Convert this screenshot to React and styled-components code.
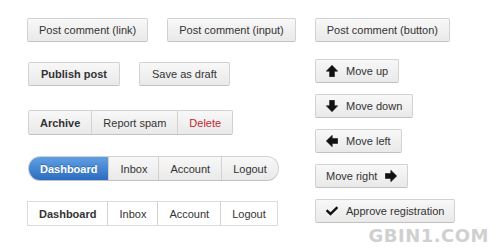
import React from "react";
import styled, { createGlobalStyle, css } from "styled-components";
import { FaCheck } from "react-icons/fa";

const Global = createGlobalStyle`
  html, body { margin: 0; padding: 0; background: #fff; }
  body { font-family: "Liberation Sans", Arial, sans-serif; }
`;

const Page = styled.div`
  position: relative;
  width: 500px;
  height: 250px;
  box-sizing: border-box;
  padding: 18px 0 0 27px;
  overflow: hidden;
`;

const TopRow = styled.div`
  display: flex;
  gap: 19px;
`;

const Columns = styled.div`
  display: flex;
  margin-top: 17px;
`;

const LeftCol = styled.div`
  width: 288px;
  display: flex;
  flex-direction: column;
  align-items: flex-start;
  padding-top: 3px;
`;

const RightCol = styled.div`
  display: flex;
  flex-direction: column;
  align-items: flex-start;
  gap: 11px;
`;

const Row = styled.div`
  display: flex;
  gap: ${(p) => p.$gap || 0}px;
  margin-top: ${(p) => p.$mt || 0}px;
  margin-left: ${(p) => p.$ml || 0}px;
`;

const baseBtn = css`
  box-sizing: border-box;
  height: 24px;
  display: inline-flex;
  align-items: center;
  font-family: "Liberation Sans", Arial, sans-serif;
  font-size: 11px;
  color: #333;
  white-space: nowrap;
`;

const Button = styled.span`
  ${baseBtn};
  padding: 0 ${(p) => (p.$icon ? 10 : p.$wide ? 12 : 11)}px;
  gap: 8px;
  border: 1px solid #d2d2d2;
  border-bottom-color: #c2c2c2;
  border-radius: 2px;
  background: linear-gradient(#f8f8f8, #e9e9e9);
  font-weight: ${(p) => (p.$bold ? 700 : 400)};
`;

const Group = styled.div`
  display: inline-flex;
  border: 1px solid #d2d2d2;
  border-bottom-color: #c2c2c2;
  border-radius: ${(p) => (p.$pill ? "12px" : p.$flat ? "0" : "2px")};
  background: ${(p) => (p.$flat ? "#fff" : "linear-gradient(#f8f8f8, #e9e9e9)")};
  overflow: hidden;
  ${(p) => p.$flat && css`border-color: #dcdcdc;`}
`;

const Segment = styled.span`
  ${baseBtn};
  height: 23px;
  padding: 0 11px;
  border-left: 1px solid #d2d2d2;
  &:first-child { border-left: none; }
  font-weight: ${(p) => (p.$bold ? 700 : 400)};
  color: ${(p) => (p.$danger ? "#c1272d" : "#333")};
  ${(p) =>
    p.$active &&
    css`
      color: #fff;
      background: linear-gradient(#5fa0e4, #2c6cc0);
      text-shadow: 0 -1px 0 rgba(0, 0, 0, 0.25);
    `}
`;

const Icon = styled.span`
  display: inline-flex;
  font-size: 12px;
  color: #111;
`;

const Arrow = ({ dir }) => {
  const rot = { up: 0, right: 90, down: 180, left: 270 }[dir];
  return (
    <svg width="12" height="12" viewBox="0 0 12 12" style={{ transform: `rotate(${rot}deg)` }}>
      <path d="M6 0.3 L11.7 6.2 L8.4 6.2 L8.4 11.7 L3.6 11.7 L3.6 6.2 L0.3 6.2 Z" fill="#111" strokeLinejoin="round" stroke="#111" strokeWidth="0.6" />
    </svg>
  );
};

const Watermark = styled.div`
  position: absolute;
  right: 11px;
  bottom: 6px;
  font-family: "DejaVu Sans", sans-serif;
  font-weight: 700;
  font-size: 18px;
  line-height: 16px;
  letter-spacing: 0.5px;
  color: #d0d0d0;
`;

export default function App() {
  return (
    <>
      <Global />
      <Page>
        <TopRow>
          <Button>Post comment (link)</Button>
          <Button>Post comment (input)</Button>
          <Button>Post comment (button)</Button>
        </TopRow>
        <Columns>
          <LeftCol>
            <Row $gap={19} $ml={1}>
              <Button $bold $wide>Publish post</Button>
              <Button $wide>Save as draft</Button>
            </Row>
            <Row $mt={24} $ml={1}>
              <Group>
                <Segment $bold>Archive</Segment>
                <Segment>Report spam</Segment>
                <Segment $danger>Delete</Segment>
              </Group>
            </Row>
            <Row $mt={21} $ml={1}>
              <Group $pill>
                <Segment $bold $active>Dashboard</Segment>
                <Segment>Inbox</Segment>
                <Segment>Account</Segment>
                <Segment>Logout</Segment>
              </Group>
            </Row>
            <Row $mt={20}>
              <Group $flat>
                <Segment $bold>Dashboard</Segment>
                <Segment>Inbox</Segment>
                <Segment>Account</Segment>
                <Segment>Logout</Segment>
              </Group>
            </Row>
          </LeftCol>
          <RightCol>
            <Button $icon><Icon><Arrow dir="up" /></Icon>Move up</Button>
            <Button $icon><Icon><Arrow dir="down" /></Icon>Move down</Button>
            <Button $icon><Icon><Arrow dir="left" /></Icon>Move left</Button>
            <Button $icon>Move right<Icon><Arrow dir="right" /></Icon></Button>
            <Button $icon><Icon><FaCheck /></Icon>Approve registration</Button>
          </RightCol>
        </Columns>
        <Watermark>GBIN1.COM</Watermark>
      </Page>
    </>
  );
}
